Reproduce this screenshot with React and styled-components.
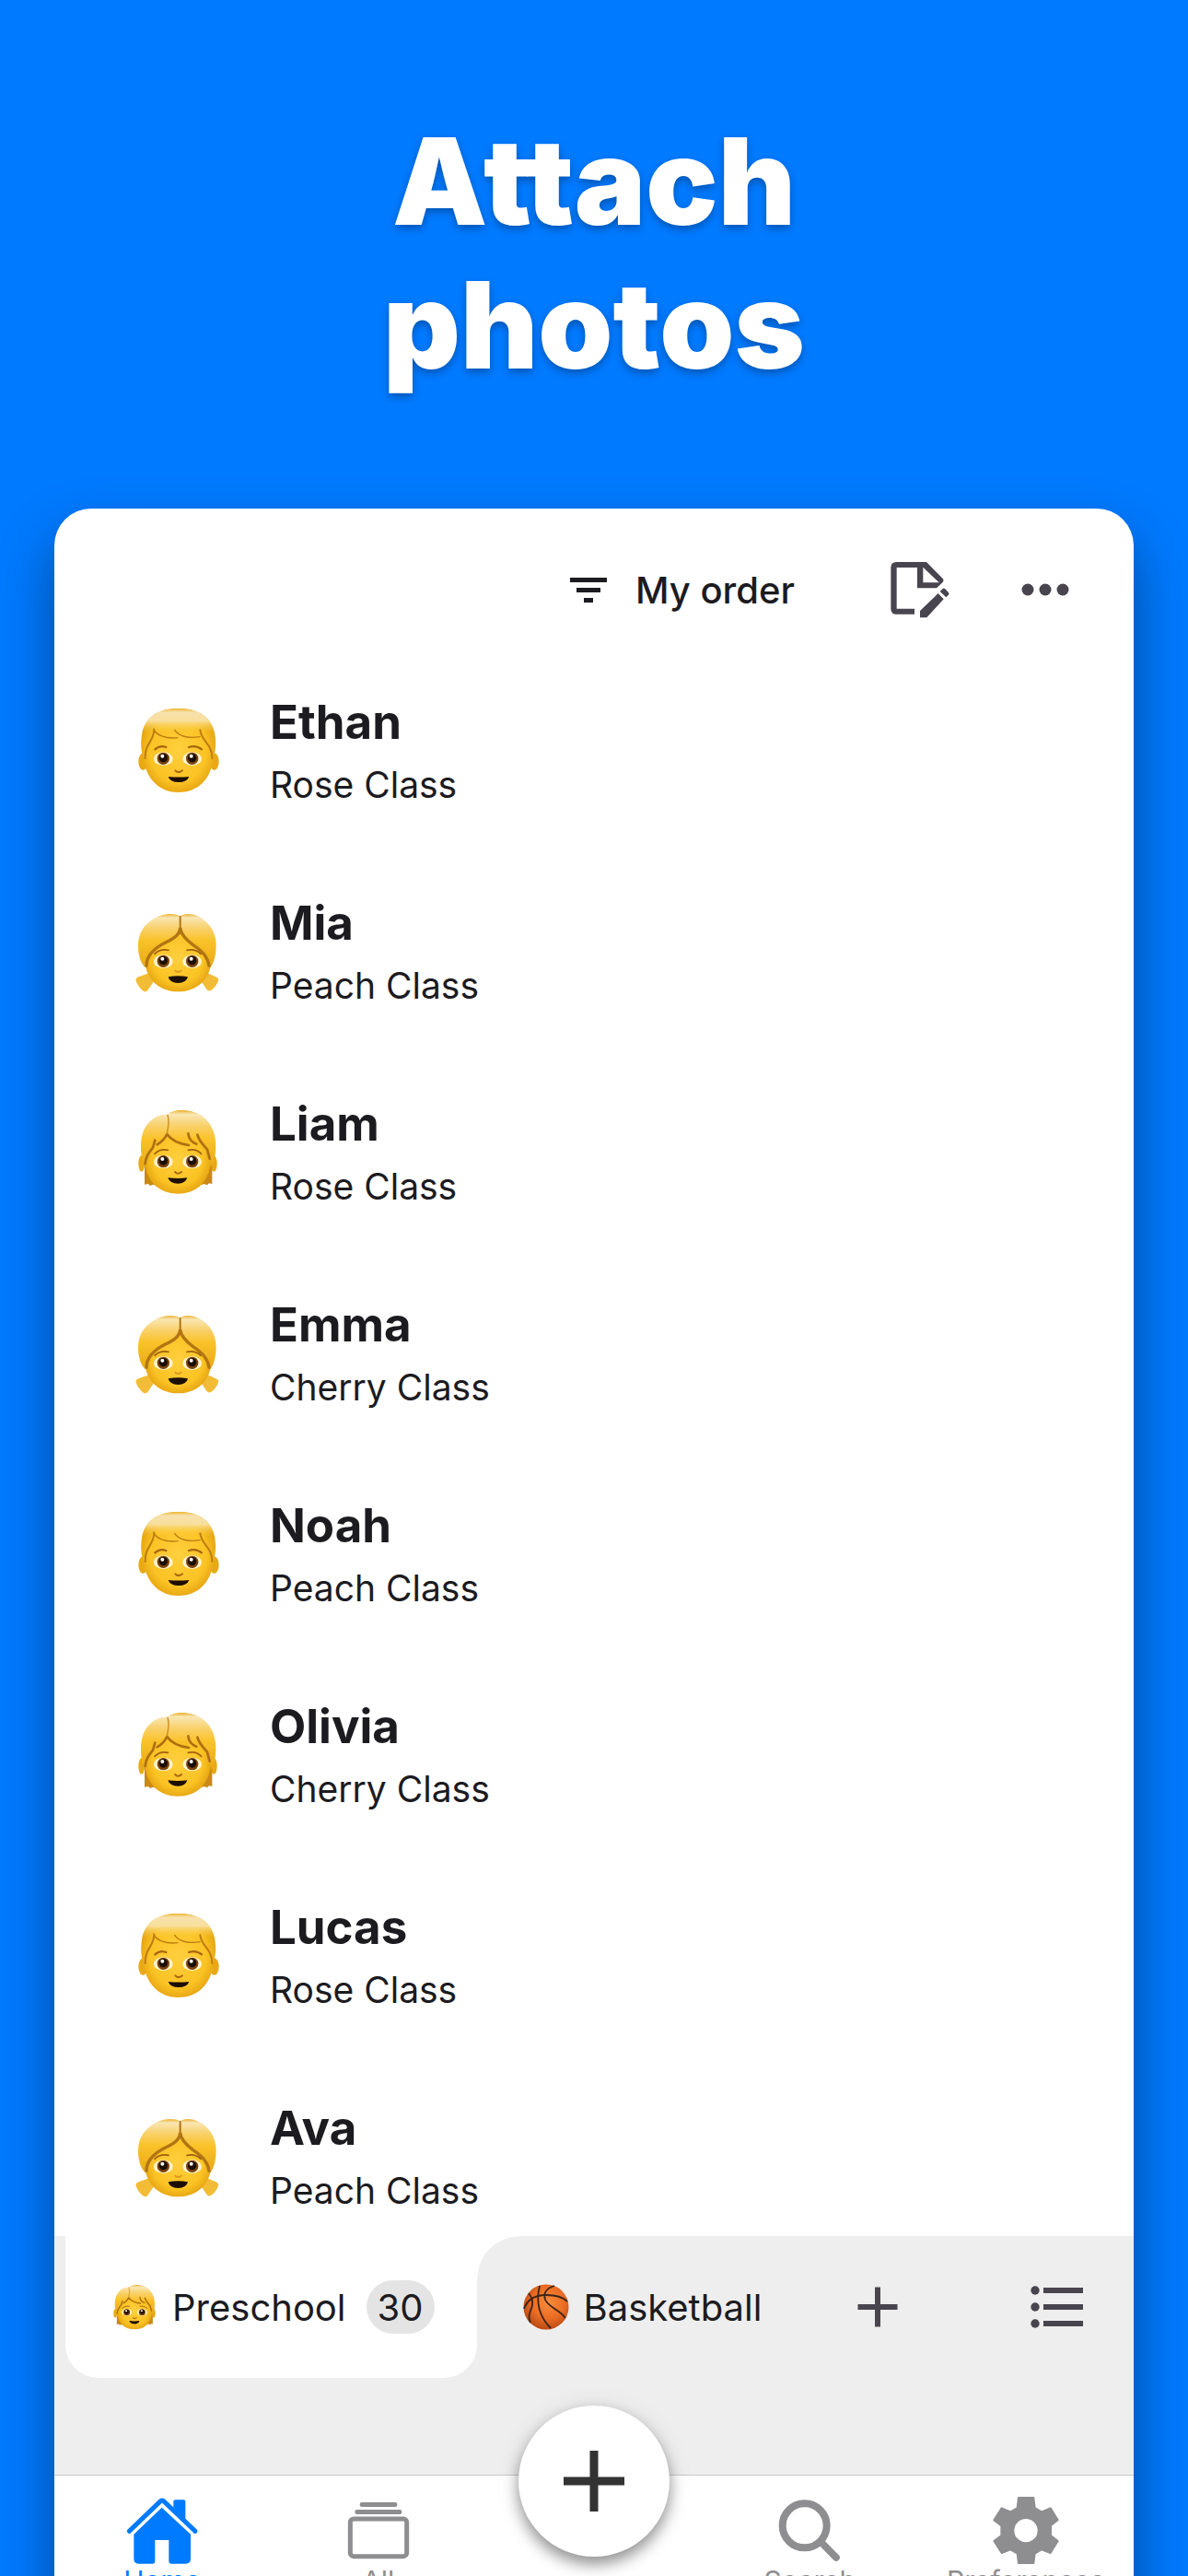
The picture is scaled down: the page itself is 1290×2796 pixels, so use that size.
import styled, { createGlobalStyle } from "styled-components";

const students = [
  { name: "Ethan", group: "Rose Class", face: "boy" },
  { name: "Mia", group: "Peach Class", face: "girl" },
  { name: "Liam", group: "Rose Class", face: "child" },
  { name: "Emma", group: "Cherry Class", face: "girl" },
  { name: "Noah", group: "Peach Class", face: "boy" },
  { name: "Olivia", group: "Cherry Class", face: "child" },
  { name: "Lucas", group: "Rose Class", face: "boy" },
  { name: "Ava", group: "Peach Class", face: "girl" },
];

function App() {
  return (
    <Page>
      <GlobalStyle />
      <Title>
        Attach
        <br />
        photos
      </Title>
      <Card>
        <Toolbar>
          <SortButton type="button">
            <FilterIcon />
            My order
          </SortButton>
          <IconButton type="button" aria-label="Edit note">
            <NoteIcon />
          </IconButton>
          <IconButton type="button" aria-label="More">
            <MoreIcon />
          </IconButton>
        </Toolbar>

        <List>
          {students.map((s) => (
            <Row key={s.name}>
              <Avatar>
                <Face kind={s.face} />
              </Avatar>
              <div>
                <Name>{s.name}</Name>
                <Group>{s.group}</Group>
              </div>
            </Row>
          ))}
        </List>

        <TabBar>
          <ActiveTab type="button">
            <TabEmoji>
              <Face kind="child" />
            </TabEmoji>
            Preschool
            <Badge>30</Badge>
          </ActiveTab>
          <Tab type="button">
            <TabEmoji>
              <Basketball />
            </TabEmoji>
            Basketball
          </Tab>
          <IconButton type="button" aria-label="Add tab">
            <AddIcon />
          </IconButton>
          <ListButton type="button" aria-label="All tabs">
            <ListIcon />
          </ListButton>
        </TabBar>

        <Nav>
          <NavLink href="#home" $active>
            <HomeIcon />
            Home
          </NavLink>
          <NavLink href="#all">
            <AllIcon />
            All
          </NavLink>
          <Fab type="button" aria-label="Add">
            <svg width="66" height="66" viewBox="0 0 66 66" stroke="#333" strokeWidth="9">
              <path d="M33 0v66M0 33h66" />
            </svg>
          </Fab>
          <NavLink href="#search">
            <SearchIcon />
            Search
          </NavLink>
          <NavLink href="#preferences">
            <GearIcon />
            Preferences
          </NavLink>
        </Nav>
      </Card>
    </Page>
  );
}

export default App;

function FilterIcon() {
  return (
    <svg width="40" height="27" viewBox="0 0 40 27" fill="currentColor">
      <path d="M0 0h40v5H0zM7 11h26v5H7zM15 22h10v5H15z" />
    </svg>
  );
}

function NoteIcon() {
  return (
    <svg width="64" height="62" viewBox="48 32 192 186" fill="currentColor">
      <path
        fillRule="evenodd"
        d="M67 35H165L219 90Q222 96 218 101L198 120H135V53H68V187H126V205H67Q49 205 49 187V53Q49 35 67 35ZM154 52V102H206Z"
      />
      <path d="M144 216V194L203 137L221 156L166 216ZM209 131L218 122Q222 119 226 123L236 133Q240 138 237 142L229 150Z" />
    </svg>
  );
}

function MoreIcon() {
  return (
    <svg width="52" height="14" viewBox="0 0 52 14" fill="currentColor">
      <circle cx="7" cy="7" r="6.5" />
      <circle cx="26" cy="7" r="6.5" />
      <circle cx="45" cy="7" r="6.5" />
    </svg>
  );
}

function AddIcon() {
  return (
    <svg width="44" height="44" viewBox="0 0 44 44" stroke="currentColor" strokeWidth="6">
      <path d="M22 0.5v43M0.5 22h43" />
    </svg>
  );
}

function ListIcon() {
  return (
    <svg width="58" height="46" viewBox="0 0 58 46" fill="currentColor">
      <circle cx="5" cy="5" r="4.7" />
      <circle cx="5" cy="23" r="4.7" />
      <circle cx="5" cy="41" r="4.7" />
      <path d="M14 2h43v6H14zM14 20h43v6H14zM14 38h43v6H14z" />
    </svg>
  );
}

function HomeIcon() {
  return (
    <svg width="80" height="74" viewBox="77 57 240 222" fill="currentColor">
      <path d="M90 172L192 74Q197 70 202 74L305 172" fill="none" stroke="currentColor" strokeWidth="15" strokeLinecap="round" />
      <path d="M234 105V76Q234 70 240 70H267Q273 70 273 76V142Z" />
      <path d="M196 95L290 182V262Q290 278 274 278H226Q219 278 219 271V201H174V271Q174 278 167 278H121Q105 278 105 262V182Z" />
    </svg>
  );
}

function AllIcon() {
  return (
    <svg width="80" height="74" viewBox="780 57 240 222" fill="currentColor">
      <rect x="839" y="78" width="122" height="15" rx="7" />
      <rect x="823" y="102" width="153" height="15" rx="7" />
      <rect x="808" y="132" width="184" height="122" rx="11" fill="none" stroke="currentColor" strokeWidth="15" />
    </svg>
  );
}

function SearchIcon() {
  return (
    <svg width="80" height="74" viewBox="28 57 240 222" fill="none" stroke="currentColor">
      <circle cx="132" cy="154" r="72" strokeWidth="24" />
      <path d="M188 210L235 258" strokeWidth="23" strokeLinecap="round" />
    </svg>
  );
}

function GearIcon() {
  return (
    <svg width="80" height="74" viewBox="730 57 240 222" fill="currentColor">
      <path
        fillRule="evenodd"
        stroke="currentColor"
        strokeWidth="6"
        strokeLinejoin="round"
        d="M826 63H875L879 96L901 109L930 97L954 136L931 154V186L954 204L930 243L901 232L879 245L875 276H826L822 245L800 232L771 243L746 204L770 186V154L746 136L771 97L800 109L822 96ZM850 129A41 41 0 1 0 850 211A41 41 0 1 0 850 129Z"
      />
    </svg>
  );
}

function Basketball() {
  return (
    <svg width="50" height="50" viewBox="0 0 50 50">
      <defs>
        <radialGradient id="ball" cx="0.55" cy="0.4" r="0.6">
          <stop offset="0" stopColor="#f98d3c" />
          <stop offset="0.6" stopColor="#ea6c24" />
          <stop offset="1" stopColor="#bd4a14" />
        </radialGradient>
      </defs>
      <circle cx="25" cy="25" r="24.5" fill="url(#ball)" />
      <g fill="none" stroke="#3c2318" strokeWidth="1.8">
        <path d="M1 27C5 16 14 12 25 12S44 15 48 19" />
        <path d="M18 2C14 18 16 34 30 48" />
        <path d="M34 2C24 5 22 11 24 17C28 26 39 27 46 37" />
        <path d="M6 10C12 17 11 23 8 29C6 34 6 38 8 42" />
      </g>
    </svg>
  );
}

function Eyes() {
  return (
    <>
      {[139, 233].map((x) => (
        <g key={x}>
          <ellipse cx={x} cy="224" rx="31" ry="22" fill="#fff3cf" />
          <circle cx={x} cy="223" r="20" fill="#7a430c" />
          <circle cx={x} cy="221" r="14" fill="#1c0e03" />
          <circle cx={x - 3} cy="215" r="6" fill="#fff" />
        </g>
      ))}
    </>
  );
}

function Face({ kind }) {
  return (
    <svg width="100%" height="100%" viewBox="48 54 276 282">
      <defs>
        <radialGradient id="skin" cx="0.5" cy="0.5" r="0.58">
          <stop offset="0" stopColor="#ffcf3e" />
          <stop offset="0.65" stopColor="#fbc324" />
          <stop offset="1" stopColor="#dd990c" />
        </radialGradient>
        <linearGradient id="hair" x1="0" y1="0" x2="0" y2="1">
          <stop offset="0" stopColor="#e9b02a" />
          <stop offset="0.07" stopColor="#f9e6b4" />
          <stop offset="0.28" stopColor="#f9d067" />
          <stop offset="0.5" stopColor="#fac228" />
          <stop offset="1" stopColor="#e8a816" />
        </linearGradient>
        <linearGradient id="cap" x1="0" y1="60" x2="0" y2="140" gradientUnits="userSpaceOnUse">
          <stop offset="0" stopColor="#ecb732" />
          <stop offset="0.15" stopColor="#f7e1ac" />
          <stop offset="0.5" stopColor="#f8df9c" />
          <stop offset="1" stopColor="#fcc82c" stopOpacity="0" />
        </linearGradient>
      </defs>
      {kind === "boy" && (
        <>
          <ellipse cx="73" cy="233" rx="15" ry="28" fill="#e9a914" />
          <ellipse cx="305" cy="233" rx="15" ry="28" fill="#e9a914" />
          <path
            d="M188 60C120 60 78 90 69 145C64 180 68 200 74 225C86 295 130 333 188 333C248 333 292 295 302 225C308 200 312 180 307 145C298 90 256 60 188 60Z"
            fill="url(#skin)"
          />
          <path d="M188 60C120 60 78 90 72 140H304C298 90 256 60 188 60Z" fill="url(#cap)" />
          <g fill="none" stroke="#bd7d11" strokeWidth="4" strokeLinecap="round">
            <path d="M108 126C112 145 146 160 186 155" />
            <path d="M176 130C190 152 224 158 258 152" />
            <path d="M109 130C108 168 78 174 80 222" strokeWidth="6" />
            <path d="M259 130C264 168 298 174 298 222" strokeWidth="6" />
          </g>
          <g fill="none" stroke="#a9680f" strokeWidth="7" strokeLinecap="round">
            <path d="M112 193Q128 178 148 186" />
            <path d="M222 186Q246 178 264 193" />
          </g>
          <Eyes />
          <path d="M178 262Q189 273 201 262" fill="none" stroke="#a9680f" strokeWidth="6" strokeLinecap="round" />
          <path d="M155 282Q189 285 223 282Q216 300 189 300Q162 300 155 282Z" fill="#1c0e03" />
        </>
      )}
      {kind === "girl" && (
        <g transform="translate(0 6)">
          <path d="M49 284Q50 276 58 274L92 262L110 286L88 318Q82 324 74 320Q56 306 49 284Z" fill="#f3bc36" />
          <path d="M319 284Q318 276 310 274L280 260L260 284L280 314Q286 322 294 318Q312 306 319 284Z" fill="#f3bc36" />
          <path d="M188 100C110 100 76 150 77 215C82 290 135 322 187 322C240 322 292 290 297 215C298 150 264 100 188 100Z" fill="url(#skin)" />
          <path
            d="M194 76C176 66 145 66 120 78C78 98 57 130 57 172C57 210 68 232 80 244C80 206 108 180 146 160C176 146 192 136 194 112C196 136 212 152 236 168C270 192 284 212 292 244C302 232 311 206 311 172C311 130 290 96 256 78C232 66 208 66 194 76Z"
            fill="url(#hair)"
          />
          <g fill="none" stroke="#b27513" strokeWidth="10" strokeLinecap="round">
            <path d="M84 238C84 206 110 180 146 162C176 148 192 136 194 114C196 136 212 152 236 170C268 192 284 210 288 238" />
            <path d="M194 78V112" strokeWidth="6" />
          </g>
          <g fill="none" stroke="#a0600f" strokeWidth="5" strokeLinecap="round">
            <path d="M111 199Q128 182 156 187" />
            <path d="M216 187Q244 182 261 199" />
          </g>
          <Eyes />
          <path d="M178 254Q187 262 197 254" fill="none" stroke="#dd9a1c" strokeWidth="6" strokeLinecap="round" />
          <path d="M155 274Q187 268 219 274Q214 294 187 294Q160 294 155 274Z" fill="#1c0e03" />
        </g>
      )}
      {kind === "child" && (
        <g transform="translate(0 12)">
          <ellipse cx="68" cy="222" rx="10" ry="26" fill="#e9a914" />
          <ellipse cx="304" cy="222" rx="10" ry="26" fill="#e9a914" />
          <path d="M78 190V290L90 288L96 294L106 290L118 294L110 200ZM298 190V288L288 286L282 292L272 288L262 292L266 200Z" fill="#c98915" />
          <path d="M188 90C110 90 76 150 78 212C83 285 130 320 187 320C244 320 289 285 294 212C296 150 264 90 188 90Z" fill="url(#skin)" />
          <path
            d="M152 62C122 58 84 84 72 122C62 156 66 190 72 216L78 236C80 212 88 192 106 172L122 148L116 164Q138 150 152 126C166 148 200 160 224 164L216 146L248 160L244 144C262 164 290 176 294 236L304 214C312 180 312 150 304 122C290 76 252 48 200 48C178 48 162 54 152 62Z"
            fill="url(#hair)"
          />
          <g fill="none" stroke="#ad6f10" strokeWidth="8" strokeLinecap="round" strokeLinejoin="round">
            <path d="M80 222C82 200 90 188 105 170L112 146M119 160Q142 146 151 126C166 148 194 158 222 162" />
            <path d="M220 124C222 140 230 152 247 158M250 128C256 150 272 164 282 176L290 206" />
          </g>
          <path d="M153 64Q160 84 151 124" fill="none" stroke="#c98a1c" strokeWidth="4" strokeLinecap="round" />
          <g fill="none" stroke="#a0600f" strokeWidth="5" strokeLinecap="round">
            <path d="M111 190Q128 172 154 178" />
            <path d="M220 178Q246 172 263 190" />
          </g>
          <g transform="translate(0 -8)">
            <Eyes />
          </g>
          <path d="M177 249Q187 260 198 249" fill="none" stroke="#a9680f" strokeWidth="6" strokeLinecap="round" />
          <path d="M154 268Q187 272 217 268Q211 287 187 287Q160 287 154 268Z" fill="#1c0e03" />
        </g>
      )}
    </svg>
  );
}

const GlobalStyle = createGlobalStyle`
  * {
    box-sizing: border-box;
  }
  body {
    margin: 0;
    font-family: Inter, "Liberation Sans", sans-serif;
    color: #1c1b1f;
    background: #007aff;
  }
  button {
    border: none;
    background: none;
    padding: 0;
    margin: 0;
    font: inherit;
    color: inherit;
    cursor: pointer;
  }
  svg {
    display: block;
    flex: none;
  }
`;

const Page = styled.main`
  height: 100vh;
  overflow: hidden;
  background: #007aff;
  padding: 119px 59px 0;
`;

const Title = styled.h1`
  margin: 0 0 121px;
  font-size: 130px;
  font-weight: 900;
  line-height: 156px;
  text-align: center;
  font-variant-ligatures: none;
  font-feature-settings: "calt" 0, "liga" 0;
  color: #fff;
  text-shadow: 0 4px 8px rgba(0, 0, 0, 0.3);
`;

const Card = styled.section`
  background: #fff;
  border-radius: 40px 40px 0 0;
  box-shadow: 0 30px 60px rgba(0, 0, 0, 0.4);
`;

const Toolbar = styled.header`
  display: flex;
  align-items: center;
  justify-content: flex-end;
  gap: 78px;
  height: 176px;
  padding-right: 70px;
`;

const SortButton = styled.button`
  display: flex;
  align-items: center;
  gap: 31px;
  margin-right: 26px;
  font-size: 40px;
  font-weight: 500;
`;

const IconButton = styled.button`
  color: #49454f;
`;

const List = styled.ul`
  display: flex;
  flex-direction: column;
  gap: 82px;
  list-style: none;
  margin: 0;
  padding: 24px 88px 13px;
`;

const Row = styled.li`
  display: flex;
  align-items: flex-start;
  gap: 54px;
`;

const Avatar = styled.div`
  width: 92px;
  height: 94px;
  margin-top: 15px;
`;

const Name = styled.h2`
  margin: 0;
  font-size: 51px;
  font-weight: 700;
  line-height: 64px;
`;

const Group = styled.p`
  margin: 0;
  font-size: 39px;
  line-height: 72px;
`;

const TabBar = styled.div`
  display: flex;
  align-items: center;
  height: 259px;
  padding: 0 54px 105px 12px;
  background: #eee;
`;

const Tab = styled.button`
  display: flex;
  align-items: center;
  height: 154px;
  padding: 0 104px 0 50px;
  font-size: 40px;
`;

const ActiveTab = styled(Tab)`
  position: relative;
  padding: 0 46px 0 50px;
  background: #fff;
  border-radius: 0 0 36px 36px;

  &::after {
    content: "";
    position: absolute;
    top: 0;
    left: 100%;
    width: 46px;
    height: 46px;
    background: radial-gradient(circle at 100% 100%, transparent 45px, #fff 46px);
  }
`;

const TabEmoji = styled.span`
  width: 50px;
  height: 50px;
  margin-right: 16px;
`;

const Badge = styled.span`
  display: flex;
  align-items: center;
  height: 58px;
  margin-left: 22px;
  padding: 0 12px;
  border-radius: 29px;
  background: #e4e4e4;
`;

const ListButton = styled(IconButton)`
  margin-left: auto;
`;

const Nav = styled.nav`
  display: grid;
  grid-template-columns: repeat(5, 1fr);
  justify-items: center;
  align-items: start;
  height: 170px;
  border-top: 1px solid #c8c8c8;
  background: #fff;
`;

const NavLink = styled.a`
  display: flex;
  flex-direction: column;
  align-items: center;
  padding-top: 22px;
  font-size: 30px;
  line-height: 36px;
  text-decoration: none;
  color: ${(props) => (props.$active ? "#007aff" : "#8e8e90")};
`;

const Fab = styled.button`
  display: flex;
  align-items: center;
  justify-content: center;
  width: 164px;
  height: 164px;
  margin-top: -76px;
  border-radius: 50%;
  background: #fff;
  box-shadow: 0 8px 16px rgba(0, 0, 0, 0.4), 0 2px 30px rgba(0, 0, 0, 0.08);
`;
